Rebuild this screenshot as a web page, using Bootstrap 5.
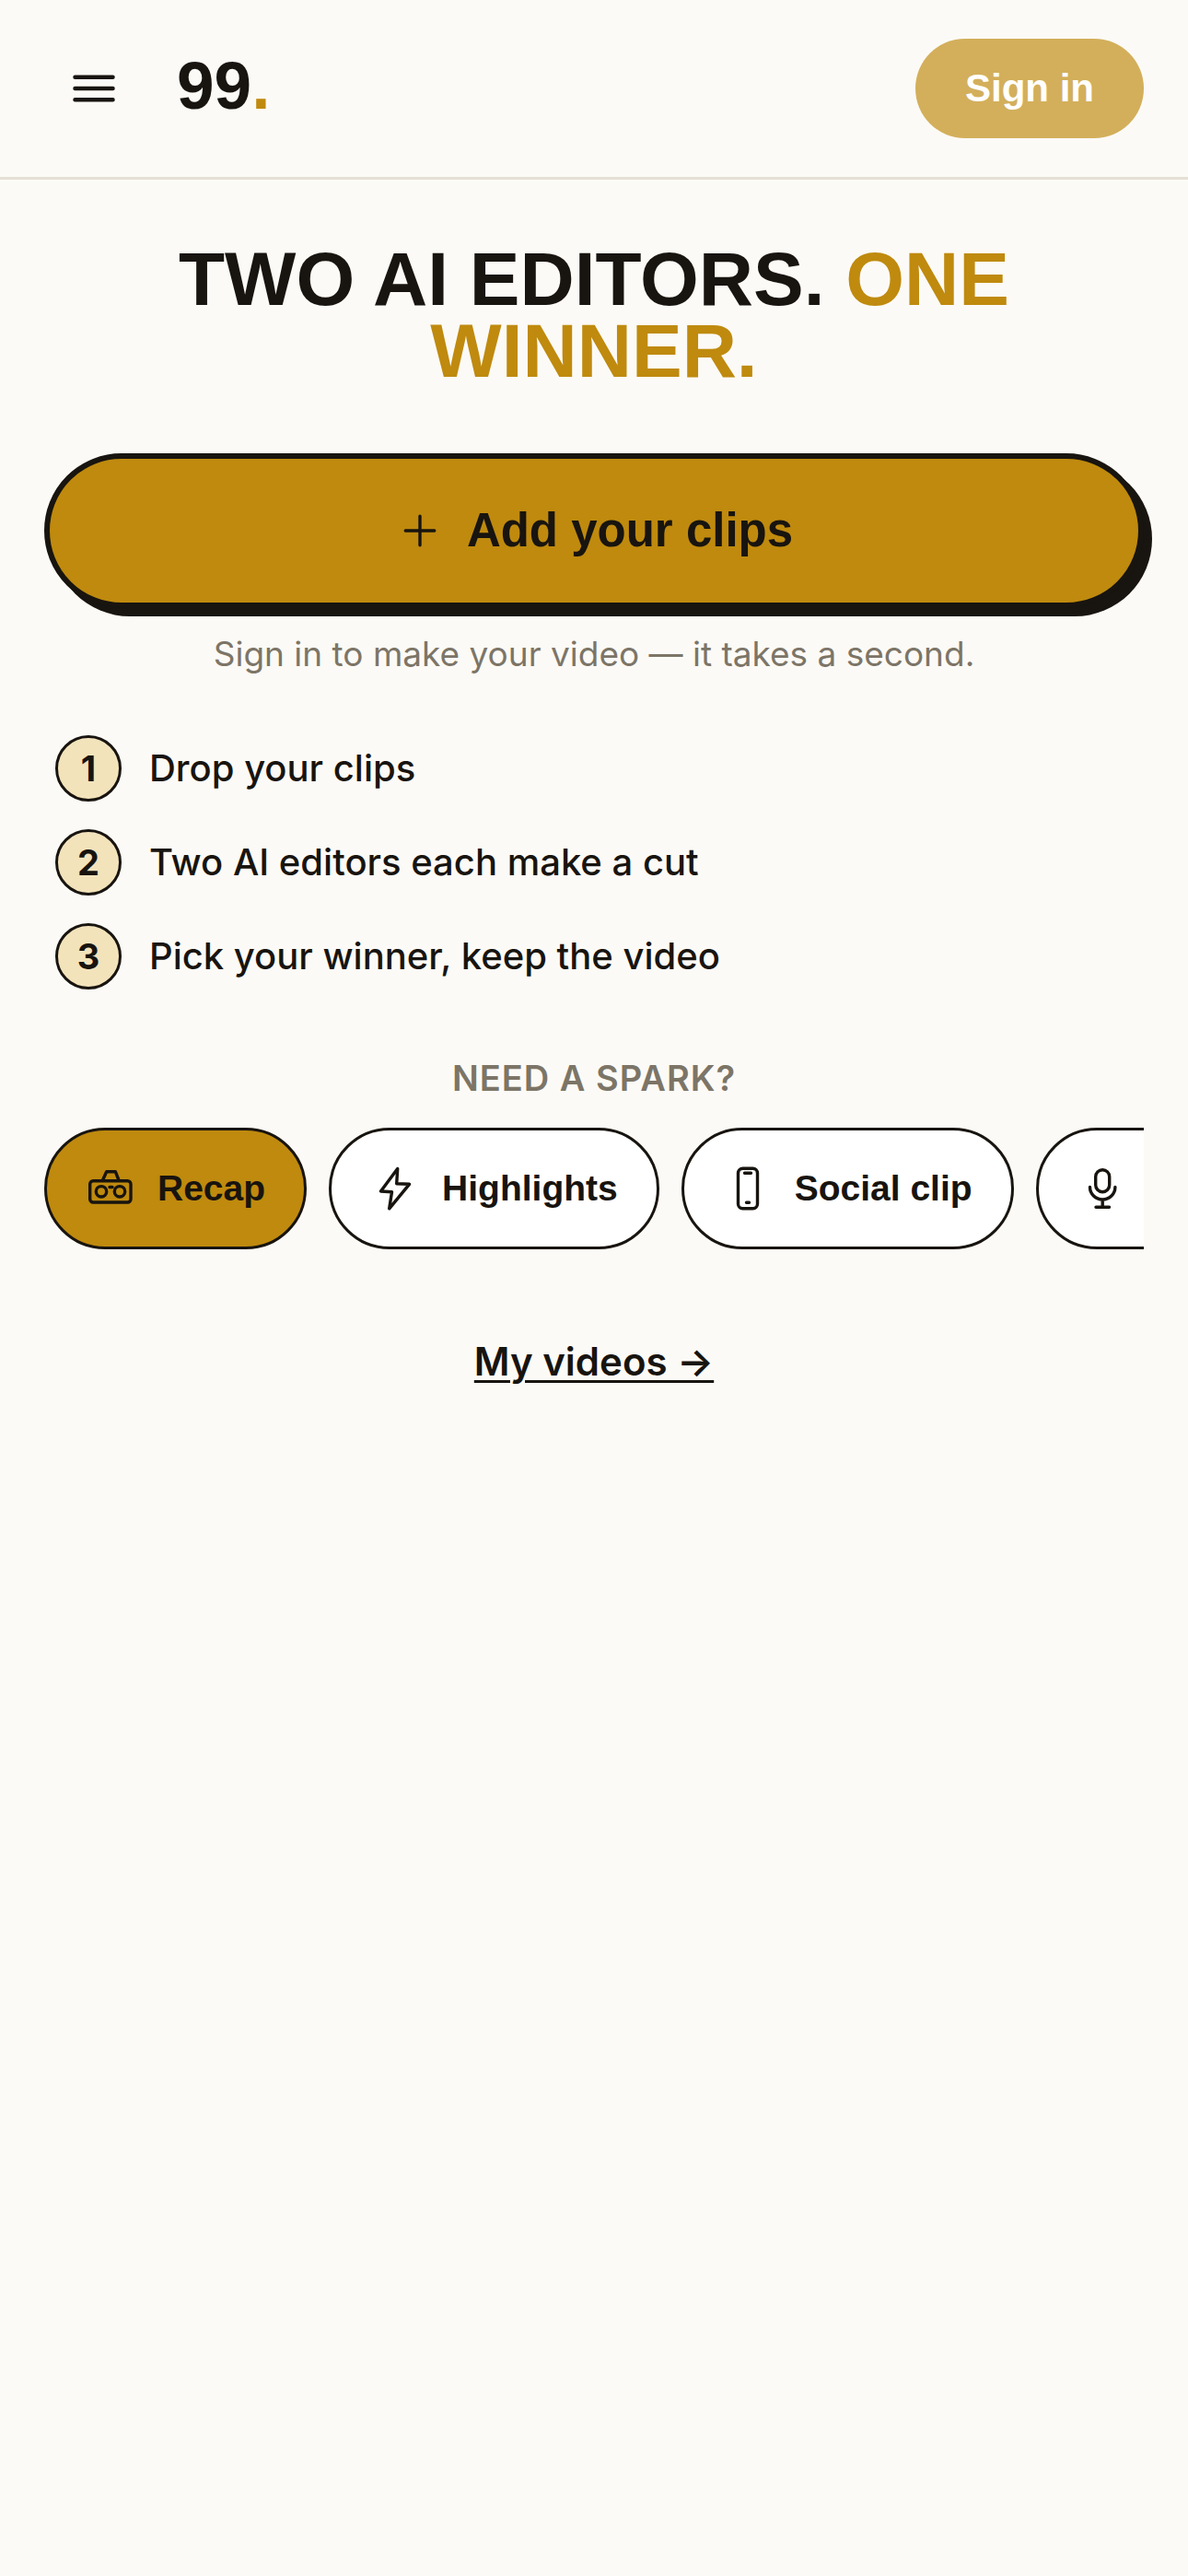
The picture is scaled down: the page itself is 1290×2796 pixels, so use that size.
<!DOCTYPE html>
<html lang="en">
<head>
<meta charset="utf-8">
<meta name="viewport" content="width=device-width, initial-scale=1">
<title>99.</title>
<link href="https://cdn.jsdelivr.net/npm/bootstrap@5.3.0/dist/css/bootstrap.min.css" rel="stylesheet">
<style>
:root { --ink: #18140f; --gold: #bf8a0e; --paper: #fcfaf6; --muted-ink: #7c7567; --line: #e4e0d6; }
body { background: var(--paper); color: var(--ink); font-family: Inter, sans-serif; }
button.btn, .brand, h1 { font-family: "Liberation Sans", Arial, sans-serif; font-weight: 700; }
svg { fill: none; stroke: currentColor; stroke-linecap: round; stroke-linejoin: round; flex: none; }
.topbar { padding: 42px 48px; border-bottom: 3px solid var(--line); }
.menu-btn { width: 108px; height: 108px; color: var(--ink); }
.brand { font-size: 73px; line-height: 102px; padding-bottom: 6px; color: var(--ink); margin-left: 36px; }
.gold { color: var(--gold); }
.sign-in, .sign-in:hover { background: #d3af5b; color: #fff; font-size: 42px; line-height: 60px; padding: 24px 54px; border: 0; }
main { padding: 69px 48px; }
h1 { font-size: 82px; line-height: 78px; margin-bottom: 72px; }
.add-btn, .add-btn:hover { background: var(--gold); color: var(--ink); border: 6px solid var(--ink); box-shadow: 9px 9px 0 var(--ink); height: 168px; font-size: 51px; gap: 24px; }
.hint { font-size: 37px; line-height: 60px; margin: 20px 0 58px; color: var(--muted-ink); }
.steps { gap: 30px; padding: 0 12px; margin-bottom: 66px; }
.steps li { gap: 30px; font-size: 40px; line-height: 60px; font-weight: 500; }
.num { width: 72px; height: 72px; border: 3px solid var(--ink); background: #f3e3bb; font-size: 38px; font-weight: 700; }
.spark { font-size: 38px; line-height: 60px; font-weight: 600; letter-spacing: 1px; color: var(--muted-ink); margin-bottom: 24px; }
.chips { gap: 24px; overflow: hidden; }
.chip, .chip:hover { height: 132px; padding: 0 42px; gap: 24px; font-size: 39px; border: 3px solid var(--ink); background: #fff; color: var(--ink); }
.chip.picked { background: var(--gold); }
.my-videos { font-size: 42px; line-height: 60px; font-weight: 600; color: var(--ink); text-underline-offset: 5px; text-decoration-thickness: 3px; }
.more { margin-top: 92px; }
</style>
<script src="https://cdn.jsdelivr.net/npm/bootstrap@5.3.0/dist/js/bootstrap.bundle.min.js"></script>
</head>
<body>
<header class="topbar d-flex align-items-center">
  <button type="button" class="menu-btn btn p-0 border-0 d-flex align-items-center justify-content-center" aria-label="Menu">
    <svg width="60" height="60" viewBox="0 0 60 60" stroke-width="4.500"><path d="M9.500 17.700h41M9.500 30h41M9.500 42.300h41"/></svg>
  </button>
  <a href="#" class="brand text-decoration-none">99<span class="gold">.</span></a>
  <button type="button" class="sign-in btn rounded-pill fw-bold ms-auto">Sign in</button>
</header>
<main>
  <h1 class="text-center fw-bold">TWO AI EDITORS. <span class="gold">ONE WINNER.</span></h1>
  <button type="button" class="add-btn btn rounded-pill fw-bold w-100 d-flex align-items-center justify-content-center">
    <svg width="54" height="54" viewBox="0 0 24 24" stroke-width="1.500"><path d="M12 5v14M5 12h14"/></svg>
    Add your clips
  </button>
  <p class="hint text-center">Sign in to make your video — it takes a second.</p>
  <ol class="steps list-unstyled d-flex flex-column">
    <li class="d-flex align-items-center"><span class="num rounded-circle d-flex align-items-center justify-content-center">1</span>Drop your clips</li>
    <li class="d-flex align-items-center"><span class="num rounded-circle d-flex align-items-center justify-content-center">2</span>Two AI editors each make a cut</li>
    <li class="d-flex align-items-center"><span class="num rounded-circle d-flex align-items-center justify-content-center">3</span>Pick your winner, keep the video</li>
  </ol>
  <h2 class="spark text-center">NEED A SPARK?</h2>
  <div class="chips d-flex">
    <button type="button" class="chip picked btn rounded-pill fw-bold d-flex align-items-center flex-shrink-0">
      <svg width="54" height="54" viewBox="0 0 54 54" stroke-width="3.400"><rect x="4.700" y="18.700" width="44.300" height="23.300" rx="3.500"/><path d="M18.500 18L22.700 8.700h9.600L36 18M26 25.500h3"/><circle cx="17" cy="30.300" r="5.700"/><circle cx="37" cy="30.300" r="5.700"/></svg>
      Recap
    </button>
    <button type="button" class="chip btn rounded-pill fw-bold d-flex align-items-center flex-shrink-0">
      <svg width="54" height="54" viewBox="0 0 54 54" stroke-width="3.400"><path d="M29.700 5.500L11.500 30l12 .8L20.700 48.800 42.500 22.300l-13.800-.6z"/></svg>
      Highlights
    </button>
    <button type="button" class="chip btn rounded-pill fw-bold d-flex align-items-center flex-shrink-0">
      <svg width="54" height="54" viewBox="0 0 54 54" stroke-width="3.400"><rect x="16.500" y="5.200" width="21" height="43.600" rx="5"/><path d="M23.500 10.300h7M25.500 42.300h3"/></svg>
      Social clip
    </button>
    <button type="button" class="chip btn rounded-pill fw-bold d-flex align-items-center flex-shrink-0">
      <svg width="54" height="54" viewBox="0 0 54 54" stroke-width="3.400"><rect x="19.700" y="6.700" width="15" height="24" rx="7.500"/><path d="M13.500 25.500a13.700 13.500 0 0 0 27.400 0M27.200 39v8M20 47.200h14.500"/></svg>
      Podcast
    </button>
  </div>
  <div class="more text-center"><a href="#" class="my-videos">My videos →</a></div>
</main>
</body>
</html>
